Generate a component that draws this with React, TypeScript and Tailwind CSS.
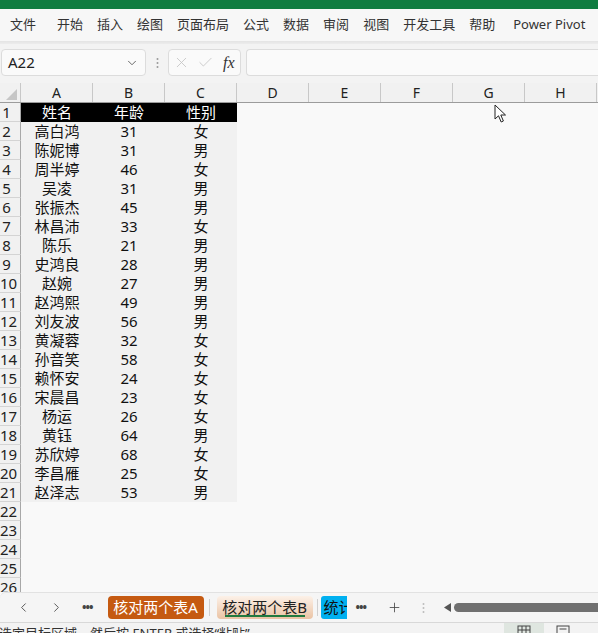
import { ChevronDown, X, Check, ChevronLeft, ChevronRight, Plus } from "lucide-react";

const MENU = ["文件", "开始", "插入", "绘图", "页面布局", "公式", "数据", "审阅", "视图", "开发工具", "帮助", "Power Pivot"];
const COLS = ["A", "B", "C", "D", "E", "F", "G", "H"];

const DATA: [string, string, string][] = [
  ["高白鸿", "31", "女"],
  ["陈妮博", "31", "男"],
  ["周半婷", "46", "女"],
  ["吴凌", "31", "男"],
  ["张振杰", "45", "男"],
  ["林昌沛", "33", "女"],
  ["陈乐", "21", "男"],
  ["史鸿良", "28", "男"],
  ["赵婉", "27", "男"],
  ["赵鸿熙", "49", "男"],
  ["刘友波", "56", "男"],
  ["黄凝蓉", "32", "女"],
  ["孙音笑", "58", "女"],
  ["赖怀安", "24", "女"],
  ["宋晨昌", "23", "女"],
  ["杨运", "26", "女"],
  ["黄钰", "64", "男"],
  ["苏欣婷", "68", "女"],
  ["李昌雁", "25", "女"],
  ["赵泽志", "53", "男"],
];

const FONT = { fontFamily: '"Noto Sans", "Noto Sans CJK SC", sans-serif' };

function RowHead({ n }: { n: number }) {
  return (
    <div className="h-[19px] w-[21px] shrink-0 border-b border-r border-b-[#d4d4d4] border-r-[#a8a8a8] bg-[#f1f1f1] text-[15px] leading-[18px] text-[#222]">
      <div className="w-[13px] whitespace-nowrap text-center">{n}</div>
    </div>
  );
}

function Cell({ children, head, data }: { children?: React.ReactNode; head?: boolean; data?: boolean }) {
  const bg = head ? "bg-black text-white" : data ? "bg-[#f1f1f1] text-[#111]" : "";
  return (
    <div className={`flex h-[19px] w-[72px] shrink-0 items-center justify-center text-[15px] leading-[19px] ${bg}`}>
      {children}
    </div>
  );
}

export default function App() {
  const rows = Array.from({ length: 26 }, (_, i) => i + 1);
  return (
    <div className="relative flex h-[633px] w-[598px] flex-col overflow-hidden bg-[#f9f9f9]" style={FONT}>
      {/* title strip */}
      <div className="h-[9px] shrink-0 bg-[#107c41]" />

      {/* ribbon tabs */}
      <div className="flex h-[32px] shrink-0 items-center bg-[#f7f7f7] pl-[3px] text-[13px] text-[#333]">
        {MENU.map((m, i) => (
          <span key={m} className={`whitespace-nowrap px-[7px] ${i === 0 ? "mr-[7px]" : ""} ${i === 10 ? "mr-[4px]" : ""}`}>
            {m}
          </span>
        ))}
      </div>
      <div className="h-[3px] shrink-0 bg-gradient-to-b from-[#e4e4e4] to-[#ececec]" />

      {/* formula bar */}
      <div className="flex h-[39px] shrink-0 items-start bg-[#f3f3f3] pt-[5px]">
        <div className="ml-[1px] flex h-[27px] w-[145px] items-center justify-between rounded-[4px] border border-[#dcdcdc] bg-[#fafafa] pl-[6px] pr-[6px]">
          <span className="text-[15px] text-[#222]">A22</span>
          <ChevronDown size={14} strokeWidth={1.5} className="text-[#555]" />
        </div>
        <div className="flex h-[27px] w-[22px] items-center justify-center">
          <svg width="3" height="12" viewBox="0 0 3 12">
            <circle cx="1.5" cy="2" r="1" fill="#999" />
            <circle cx="1.5" cy="6" r="1" fill="#999" />
            <circle cx="1.5" cy="10" r="1" fill="#999" />
          </svg>
        </div>
        <div className="flex h-[27px] w-[73px] items-center rounded-[4px] border border-[#dcdcdc] bg-[#fafafa] pl-[4px]">
          <X size={17} strokeWidth={1.2} className="text-[#c4c4c4]" />
          <Check size={17} strokeWidth={1.2} className="ml-[7px] text-[#c4c4c4]" />
          <span className="ml-[9px] text-[16px] italic text-[#333]" style={{ fontFamily: '"Liberation Serif", serif' }}>
            fx
          </span>
        </div>
        <div className="ml-[5px] h-[27px] flex-1 rounded-l-[4px] border border-r-0 border-[#dcdcdc] bg-[#fafafa]" />
      </div>

      {/* column headers */}
      <div className="flex h-[20px] shrink-0 border-b border-[#9c9c9c] bg-[#f1f1f1]">
        <div className="relative w-[21px] shrink-0 border-r border-[#c8c8c8]">
          <svg className="absolute bottom-[2px] right-[3px]" width="11" height="11" viewBox="0 0 11 11">
            <path d="M11 0 L11 11 L0 11 Z" fill="#c6c6c6" />
          </svg>
        </div>
        {COLS.map((c) => (
          <div
            key={c}
            className="flex w-[72px] shrink-0 items-center justify-center border-r border-[#c8c8c8] text-[14px] leading-[19px] text-[#222]"
          >
            {c}
          </div>
        ))}
      </div>

      {/* grid */}
      <div className="flex-1 overflow-hidden">
        {rows.map((n) => {
          const head = n === 1;
          const rec = n >= 2 && n <= 21 ? DATA[n - 2] : null;
          return (
            <div key={n} className="flex">
              <RowHead n={n} />
              {head ? (
                <>
                  <Cell head>姓名</Cell>
                  <Cell head>年龄</Cell>
                  <Cell head>性别</Cell>
                </>
              ) : rec ? (
                <>
                  <Cell data>{rec[0]}</Cell>
                  <Cell data>{rec[1]}</Cell>
                  <Cell data>{rec[2]}</Cell>
                </>
              ) : (
                <>
                  <Cell />
                  <Cell />
                  <Cell />
                </>
              )}
            </div>
          );
        })}
      </div>

      {/* sheet tabs */}
      <div className="flex h-[30px] shrink-0 items-center rounded-tl-[6px] border-t border-[#e2e2e2] bg-[#f5f5f5] text-[14px]">
        <ChevronLeft size={15} strokeWidth={1.4} className="ml-[16px] text-[#444]" />
        <ChevronRight size={15} strokeWidth={1.4} className="ml-[18px] text-[#444]" />
        <span className="ml-[18px] text-[12px] font-bold leading-none tracking-[-1px] text-[#444]">•••</span>
        <div className="ml-[15px] flex h-[23px] w-[96px] items-center justify-center rounded-[4px] bg-[#c55a11] text-[15px] text-white">
          核对两个表A
        </div>
        <div className="ml-[5px] mr-[7px] h-[17px] w-px bg-[#cfcfcf]" />
        <div className="relative flex h-[23px] w-[96px] items-center justify-center rounded-[4px] bg-gradient-to-b from-[#fcf1e8] to-[#eac3a4] text-[15px] text-[#222]">
          核对两个表B
          <div className="absolute bottom-[2px] left-[8px] right-[8px] h-[2px] bg-[#217a3f]" />
        </div>
        <div className="ml-[4px] mr-[3px] h-[17px] w-px bg-[#cfcfcf]" />
        <div className="flex h-[23px] w-[26px] items-center overflow-hidden whitespace-nowrap rounded-l-[3px] bg-[#00b0f0] pl-[3px] text-[15px] text-[#111]">
          统计
        </div>
        <span className="ml-[9px] text-[12px] font-bold leading-none tracking-[-1px] text-[#444]">•••</span>
        <Plus size={15} strokeWidth={1.3} className="ml-[21px] text-[#444]" />
        <svg className="ml-[20px]" width="3" height="12" viewBox="0 0 3 12">
          <circle cx="1.5" cy="2" r="1" fill="#bbb" />
          <circle cx="1.5" cy="6" r="1" fill="#bbb" />
          <circle cx="1.5" cy="10" r="1" fill="#bbb" />
        </svg>
        <svg className="ml-[19px]" width="7" height="9" viewBox="0 0 7 9">
          <path d="M7 0 L7 9 L0 4.5 Z" fill="#555" />
        </svg>
        <div className="ml-[3px] h-[9px] flex-1 rounded-l-full bg-[#707070]" />
      </div>

      {/* status bar */}
      <div className="flex h-[11px] shrink-0 border-t border-[#d8d8d8] bg-[#f3f3f3] text-[13px] text-[#333]">
        <div className="flex-1 overflow-hidden whitespace-nowrap leading-[18px]">
          <span className="-ml-[1px] inline-block pt-[1px]">选定目标区域，然后按 ENTER 或选择“粘贴”</span>
        </div>
        <div className="flex w-[40px] items-start justify-center bg-[#dfe6e0] pt-[2px]">
          <svg width="14" height="12" viewBox="0 0 14 12">
            <rect x="1" y="1" width="12" height="12" fill="none" stroke="#444" />
            <path d="M1 5 H13 M5 1 V13 M9 1 V13" stroke="#444" />
          </svg>
        </div>
        <div className="ml-[12px] mr-[28px] flex items-start pt-[2px]">
          <svg width="14" height="12" viewBox="0 0 14 12">
            <rect x="1" y="1" width="12" height="12" fill="none" stroke="#444" />
            <path d="M3.5 4 H10.5" stroke="#444" />
          </svg>
        </div>
      </div>

      {/* mouse pointer */}
      <svg className="absolute left-[494px] top-[104px]" width="14" height="20" viewBox="0 0 14 20">
        <path d="M1 1 L1 15 L4.5 11.8 L7.2 18 L9.4 17 L6.8 11 L11.5 11 Z" fill="#fff" stroke="#222" strokeWidth="1" strokeLinejoin="round" />
      </svg>
    </div>
  );
}
